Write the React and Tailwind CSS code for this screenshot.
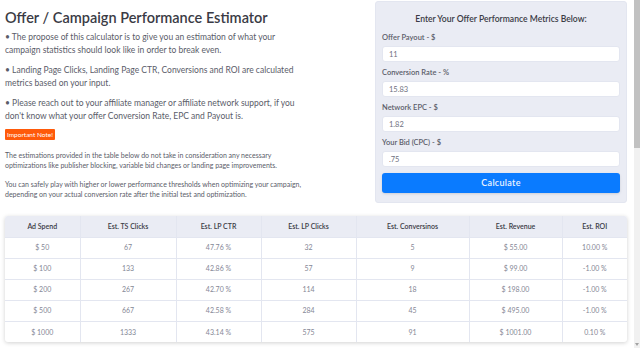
const rows = [
  ["$ 50", "67", "47.76 %", "32", "5", "$ 55.00", "10.00 %"],
  ["$ 100", "133", "42.86 %", "57", "9", "$ 99.00", "-1.00 %"],
  ["$ 200", "267", "42.70 %", "114", "18", "$ 198.00", "-1.00 %"],
  ["$ 500", "667", "42.58 %", "284", "45", "$ 495.00", "-1.00 %"],
  ["$ 1000", "1333", "43.14 %", "575", "91", "$ 1001.00", "0.10 %"],
];

const columns = [
  { label: "Ad Spend", w: "w-[75px]" },
  { label: "Est. TS Clicks", w: "w-[96px]" },
  { label: "Est. LP CTR", w: "w-[85px]" },
  { label: "Est. LP Clicks", w: "w-[95px]" },
  { label: "Est. Conversinos", w: "w-[113px]" },
  { label: "Est. Revenue", w: "w-[93px]" },
  { label: "Est. ROI", w: "w-[65px]" },
];

const fields = [
  { label: "Offer Payout - $", value: "11" },
  { label: "Conversion Rate - %", value: "15.83" },
  { label: "Network EPC - $", value: "1.82" },
  { label: "Your Bid (CPC) - $", value: ".75" },
];

function Field({ label, value }) {
  return (
    <div className="mb-[6px]">
      <label className="block text-[7.5px] leading-[10px] font-semibold text-[#5a5c69]">{label}</label>
      <input
        type="text"
        defaultValue={value}
        className="mt-[3px] block h-[16px] w-full rounded-[3px] border border-[#e3e6f0] bg-white px-[6px] text-[7.5px] text-[#6e707e] outline-none"
      />
    </div>
  );
}

export default function App() {
  return (
    <div className="flex h-[348px] overflow-hidden bg-white font-['Lato','Open_Sans',sans-serif]">
      <div className="min-w-0 flex-1 pr-[7px] pl-[5px] pt-px">
        <div className="flex">
          <div className="w-[306px] pt-[8px] text-[#5a5c69]">
            <h1 className="text-[14.5px] leading-[17px] font-semibold text-[#3a3b45]">
              Offer / Campaign Performance Estimator
            </h1>
            <div className="mt-[5px] space-y-[7px] text-[8.5px] leading-[13px]">
              <p>• The propose of this calculator is to give you an estimation of what your campaign statistics should look like in order to break even.</p>
              <p>• Landing Page Clicks, Landing Page CTR, Conversions and ROI are calculated metrics based on your input.</p>
              <p>• Please reach out to your affiliate manager or affiliate network support, if you don't know what your offer Conversion Rate, EPC and Payout is.</p>
            </div>
            <span className="mt-[6px] block w-fit rounded-[1px] bg-[#ff5a0a] px-[2px] text-[6.5px] leading-[11px] text-white">
              Important Note!
            </span>
            <div className="mt-[10px] space-y-[9px] text-[7px] leading-[10px]">
              <p>The estimations provided in the table below do not take in consideration any necessary optimizations like publisher blocking, variable bid changes or landing page improvements.</p>
              <p>You can safely play with higher or lower performance thresholds when optimizing your campaign, depending on your actual conversion rate after the initial test and optimization.</p>
            </div>
          </div>
          <div className="ml-auto w-[252px] self-start rounded-[3px] border border-[#e3e6f0] bg-[#eaecf4] px-[6px] pt-[11px] pb-[9px]">
            <h2 className="mb-[8px] text-center text-[8.6px] leading-[12px] font-semibold text-[#3a3b45]">
              Enter Your Offer Performance Metrics Below:
            </h2>
            {fields.map((f) => (
              <Field key={f.label} {...f} />
            ))}
            <button
              type="button"
              className="mt-px block h-[20px] w-full rounded-[3px] bg-[#0a7bff] text-[9px] font-semibold tracking-[0.3px] text-[#eaf3ff] shadow-sm"
            >
              Calculate
            </button>
          </div>
        </div>

        <div className="mt-[13px] overflow-hidden rounded-[3px] bg-white shadow-[0_1px_4px_rgba(0,0,0,0.18)]">
          <table className="w-full table-fixed border-collapse text-center text-[7px]">
            <thead className="bg-[#eaecf4]">
              <tr>
                {columns.map((c) => (
                  <th
                    key={c.label}
                    className={`${c.w} h-[21px] border-l border-[#e3e6f0] font-semibold text-[#3a3b45] first:border-l-0`}
                  >
                    {c.label}
                  </th>
                ))}
              </tr>
            </thead>
            <tbody className="text-[#858796]">
              {rows.map((r) => (
                <tr key={r[0]} className="border-t border-[#e3e6f0]">
                  {r.map((v, i) => (
                    <td key={i} className="h-[21px] border-l border-[#e3e6f0] first:border-l-0">
                      {v}
                    </td>
                  ))}
                </tr>
              ))}
            </tbody>
          </table>
        </div>
      </div>

      {/* window scrollbar */}
      <div className="flex w-[6px] shrink-0 flex-col bg-[#f1f1f1]">
        <div className="h-[148px] bg-[#c1c1c1]" />
        <div className="flex-1" />
        <div className="mx-auto mb-[2px] h-0 w-0 border-x-[2px] border-t-[3px] border-x-transparent border-t-[#a3a3a3]" />
      </div>
    </div>
  );
}
